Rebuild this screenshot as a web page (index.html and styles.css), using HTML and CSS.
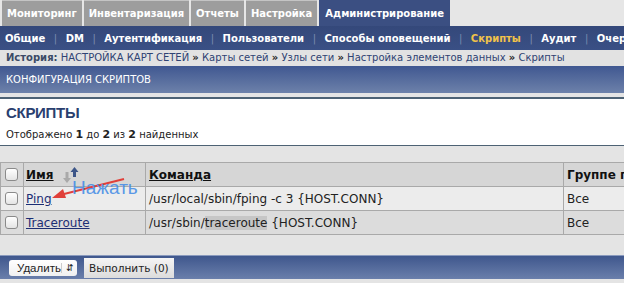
FILE: index.html
```html
<!DOCTYPE html>
<html>
	<head>
		<meta charset="utf-8">
		<title>Скрипты</title>
		<link rel="stylesheet" href="styles.css">
	</head>
	<body>
		<div class="tabs">
			<a class="tab">Мониторинг</a>
			<a class="tab">Инвентаризация</a>
			<a class="tab">Отчеты</a>
			<a class="tab">Настройка</a>
			<a class="tab active">Администрирование</a>
		</div>
		<div class="submenu">
			<a>Общие</a><span class="sep">|</span>
			<a>DM</a><span class="sep">|</span>
			<a>Аутентификация</a><span class="sep">|</span>
			<a>Пользователи</a><span class="sep">|</span>
			<a>Способы оповещений</a><span class="sep">|</span>
			<a class="cur">Скрипты</a><span class="sep">|</span>
			<a>Аудит</a><span class="sep">|</span>
			<a>Очер</a>
		</div>
		<div class="history">
			<b>История:</b> НАСТРОЙКА КАРТ СЕТЕЙ <i>»</i> Карты сетей <i>»</i> Узлы сети <i>»</i> Настройка элементов данных <i>»</i> Скрипты
		</div>
		<div class="title_bar">КОНФИГУРАЦИЯ СКРИПТОВ</div>
		<div class="panel">
			<h1>СКРИПТЫ</h1>
			<p>Отображено <b>1</b> до <b>2</b> из <b>2</b> найденных</p>
		</div>
		<div class="list">
			<table>
				<tr class="head">
					<td class="chk"><span class="box"></span></td>
					<td class="name"><u>Имя</u>
						<svg class="sort" width="16" height="16" viewBox="0 0 16 16">
							<path d="M2.5 5h3v6h2.5l-4 5l-4-5h2.5z" fill="#a9a9a9"/>
							<path d="M11.5 0l4 5h-2.5v5h-3v-5h-2.5z" fill="#3d5688"/>
						</svg>
					</td>
					<td class="cmd"><u>Команда</u></td>
					<td class="grp">Группе п</td>
				</tr>
				<tr class="odd">
					<td class="chk"><span class="box"></span></td>
					<td class="name"><a>Ping</a></td>
					<td>/usr/local/sbin/fping -c 3 {HOST.CONN}</td>
					<td>Все</td>
				</tr>
				<tr class="even">
					<td class="chk"><span class="box"></span></td>
					<td class="name"><a>Traceroute</a></td>
					<td>/usr/sbin/<span class="mark">traceroute</span> {HOST.CONN}</td>
					<td>Все</td>
				</tr>
			</table>
			<div class="hint">
				<svg width="80" height="30" viewBox="0 0 80 30">
					<path d="M76 4L12 20" stroke="#e0403a" stroke-width="2" fill="none"/>
					<path d="M4 23l11-9l3 9z" fill="#e0403a"/>
				</svg>
				<span>Нажать</span>
			</div>
		</div>
		<div class="footer_bar">
			<span class="select">Удалить<i>&#8693;</i></span>
			<span class="btn">Выполнить (0)</span>
		</div>
	</body>
</html>
```

FILE: styles.css
```css
body {
	margin: 0;
	background: #e4e4e4;
	font-family: "DejaVu Sans", Verdana, sans-serif;
	font-size: 11px;
	color: #222;
	overflow: hidden;
}

a {
	cursor: pointer;
}

.tabs {
	display: flex;
	height: 26px;
	padding-left: 2px;
	background: #e6e6e6;
	white-space: nowrap;
}

.tab {
	display: flex;
	align-items: center;
	padding: 0 5px;
	margin-right: 2px;
	background: #9d9d9d;
	color: #fff;
	font-weight: bold;
	font-size: 10px;
	border-top: 1px solid #c4c4c4;
}

.tab.active {
	background: #3b4f82;
	border-top-color: #3b4f82;
	padding: 0 6px;
}

.submenu {
	display: flex;
	align-items: center;
	height: 24px;
	padding-left: 5px;
	background: linear-gradient(#34487a, #3a5085);
	color: #fff;
	font-weight: bold;
	font-size: 10px;
	white-space: nowrap;
}

.submenu .sep {
	color: #7c8cb0;
	font-weight: normal;
	padding: 0 8.5px;
}

.submenu .cur {
	color: #f0c24a;
}

.history {
	height: 16px;
	line-height: 16px;
	padding-left: 6px;
	background: #e2e2e2;
	color: #2f4373;
	font-size: 10px;
	white-space: nowrap;
}

.history b {
	color: #3c4a66;
}

.history i {
	font-style: normal;
	font-weight: bold;
	color: #222;
}

.title_bar {
	height: 27px;
	line-height: 27px;
	padding-left: 6px;
	background: linear-gradient(#405891, #6d81aa);
	color: #fff;
	font-size: 10px;
}

.panel {
	margin-top: 4px;
	background: #fff;
	border-top: 2px solid #4d6274;
	border-bottom: 1px solid #4d6274;
	padding: 5px 6px 4px;
}

.panel h1 {
	margin: 0 0 6px;
	font-family: "Liberation Sans", Arial, sans-serif;
	font-size: 15px;
	line-height: 18px;
	letter-spacing: -0.3px;
	color: #2a3f6f;
}

.panel p {
	margin: 0;
	font-size: 10px;
	line-height: 13px;
}

.panel p b {
	font-size: 11px;
}

.list {
	position: relative;
	margin-top: 16px;
	height: 93px;
}

table {
	border-collapse: collapse;
	width: 700px;
	table-layout: fixed;
	font-size: 12px;
}

td {
	height: 23px;
	padding: 0 3px;
	border: 1px solid #a9a9a9;
	white-space: nowrap;
	overflow: hidden;
}

td.chk {
	width: 18px;
	padding: 0 0 0 4px;
}

td.name {
	width: 117px;
	padding: 0 2px;
}

td.cmd {
	width: 411px;
}

.head td {
	background: #d6d6d6;
	font-weight: bold;
	color: #111;
}

.odd td {
	background: #ececec;
}

.even td {
	background: #dcdcdc;
}

.box {
	display: block;
	width: 11px;
	height: 11px;
	border: 1px solid #8a8a8a;
	border-radius: 3px;
	background: linear-gradient(#fff, #e4e4e4);
}

.sort {
	vertical-align: -4px;
	margin-left: 5px;
}

td a {
	color: #1c2e74;
	text-decoration: underline;
}

.mark {
	background: #c6c6c6;
}

.hint {
	position: absolute;
	left: 48px;
	top: 11px;
	width: 100px;
	height: 32px;
}

.hint svg {
	position: absolute;
	left: 0;
	top: 2px;
}

.hint span {
	position: absolute;
	left: 24px;
	top: 4px;
	font-family: "Liberation Sans", Arial, sans-serif;
	font-size: 19px;
	color: #4a8fe6;
	opacity: 0.9;
}

.footer_bar {
	display: flex;
	align-items: center;
	gap: 7px;
	height: 23px;
	padding-left: 9px;
	background: linear-gradient(#3f578d, #6a7fab);
	border-top: 1px solid #8a9abd;
}

.select {
	display: flex;
	align-items: center;
	justify-content: space-between;
	width: 56px;
	height: 16px;
	padding: 0 4px 0 8px;
	background: linear-gradient(#fff, #f0f0f0);
	border-radius: 3px;
	font-family: "Liberation Sans", Arial, sans-serif;
	font-size: 11.5px;
}

.select i {
	font-style: normal;
	font-size: 9px;
	border-left: 1px solid #ccc;
	padding-left: 4px;
}

.btn {
	height: 20px;
	line-height: 20px;
	padding: 0 5px;
	background: linear-gradient(#f4f4f4, #dcdcdc);
	font-family: "DejaVu Sans", sans-serif;
	font-size: 10.5px;
}
```
